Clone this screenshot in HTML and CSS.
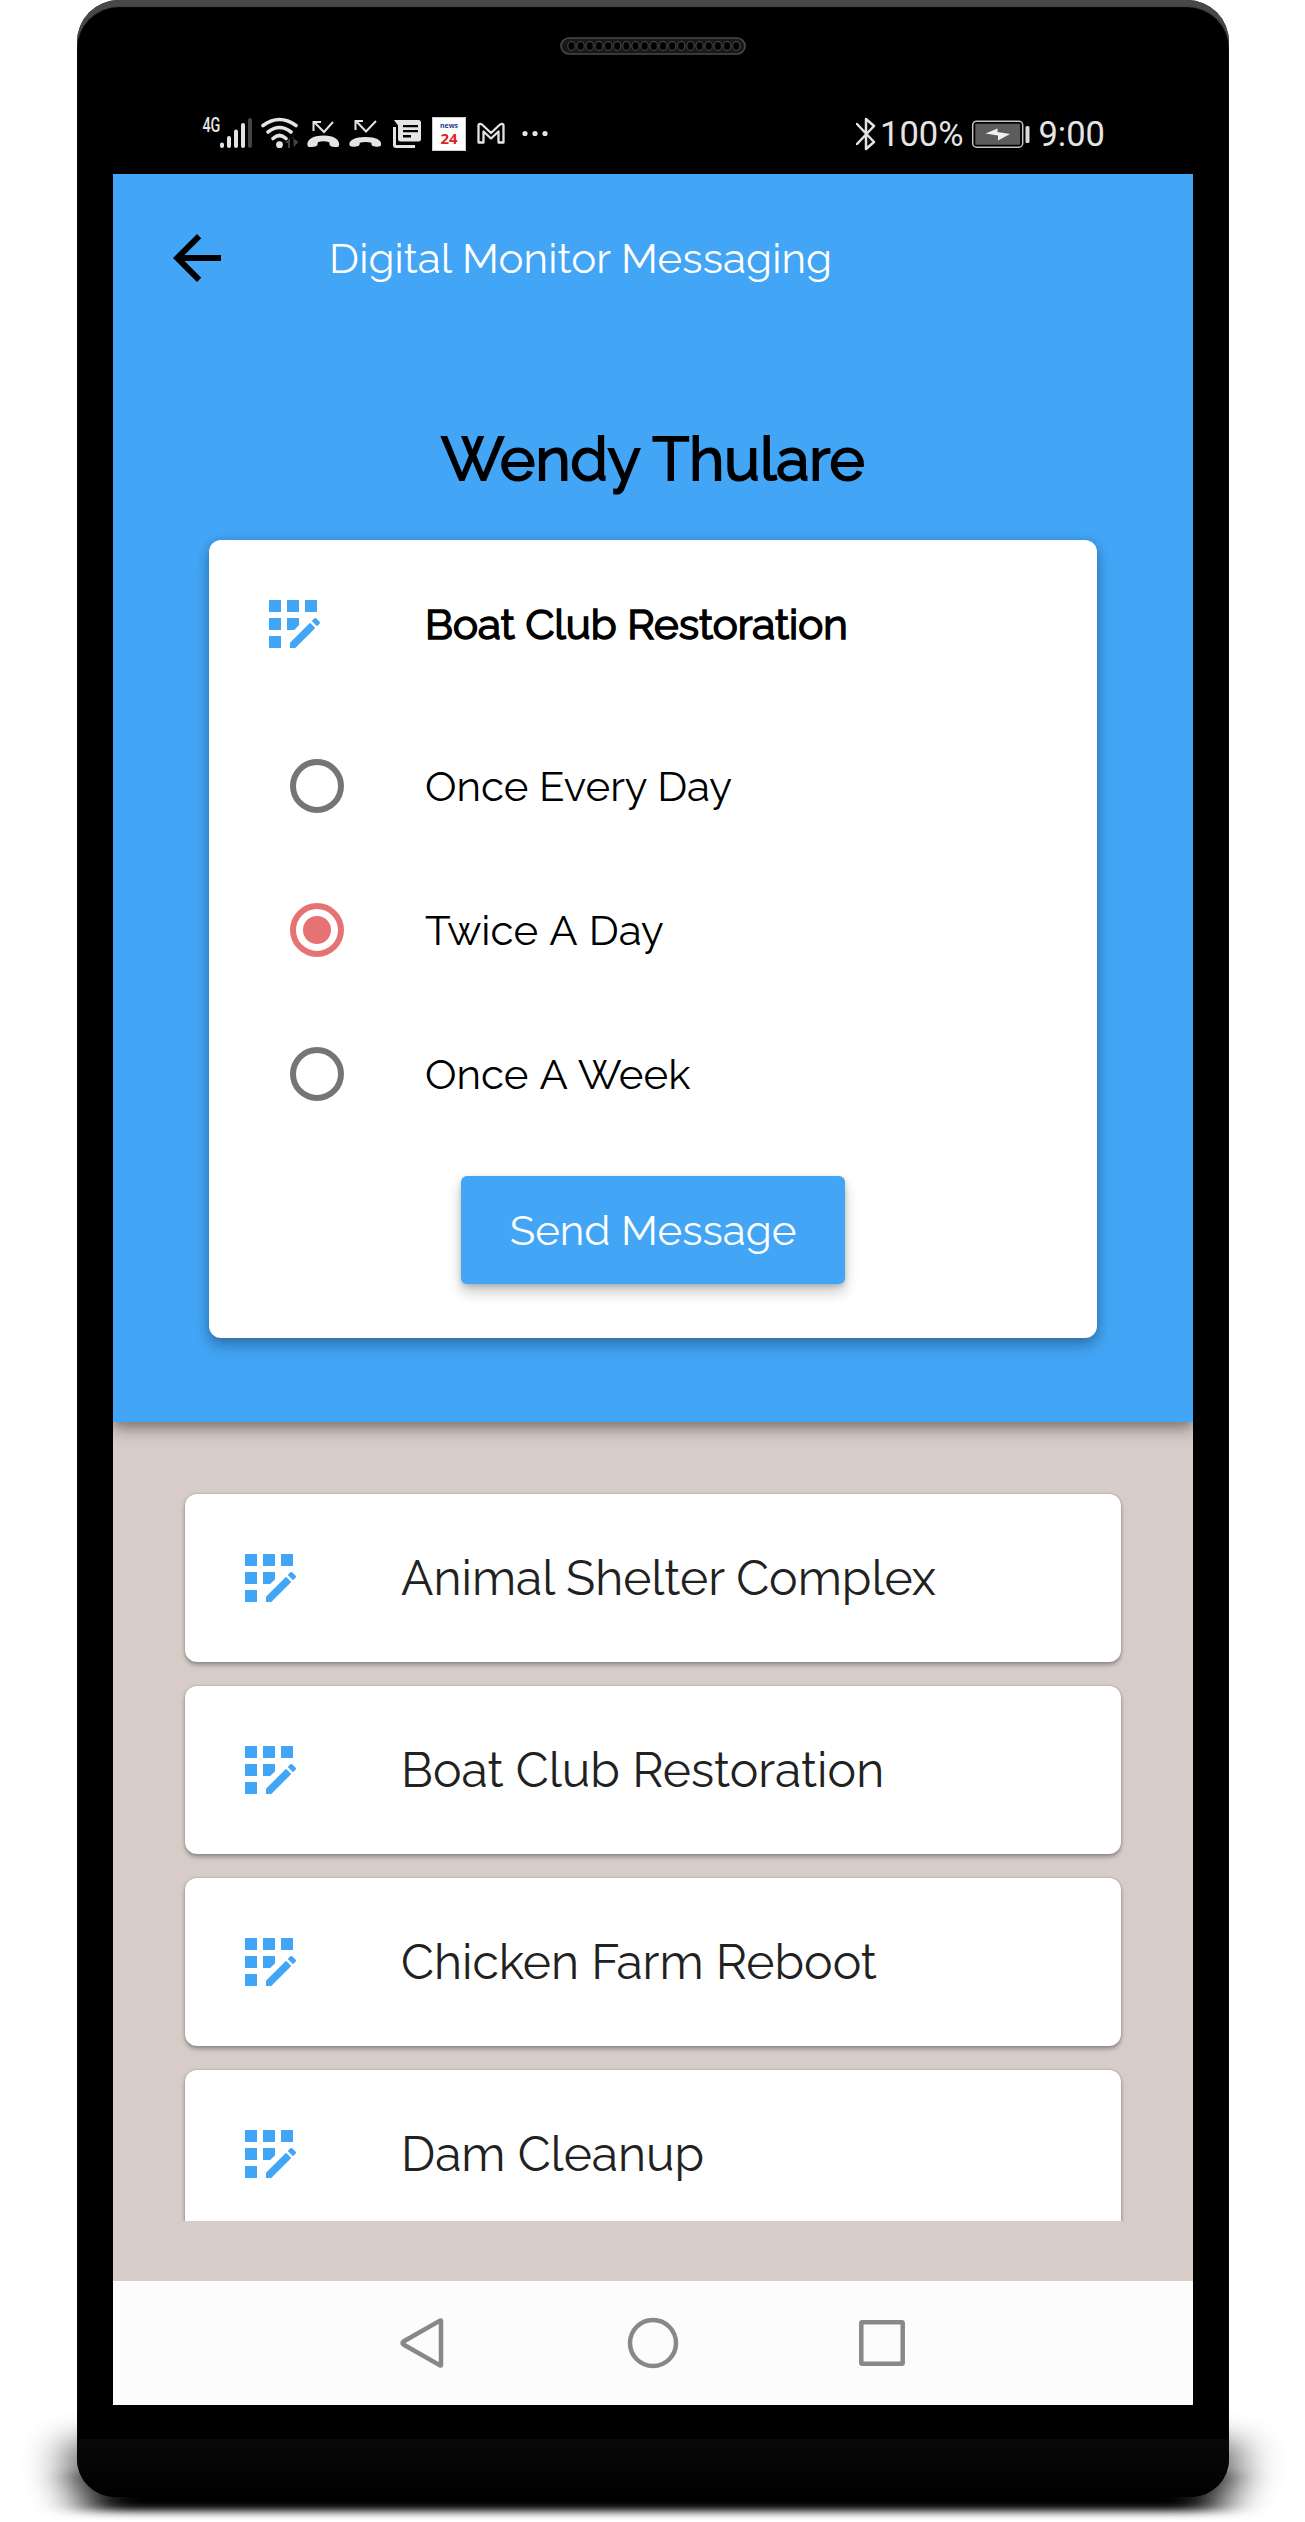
FILE: index.html
```html
<!DOCTYPE html>
<html lang="en">
<head>
<meta charset="utf-8">
<title>Digital Monitor Messaging</title>
<link rel="stylesheet" href="styles.css">
</head>
<body>
<svg class="defs" width="0" height="0" aria-hidden="true">
  <symbol id="app-registration" viewBox="0 0 24 24">
    <path d="M10 4h4v4h-4zM4 16h4v4H4zM4 10h4v4H4zM4 4h4v4H4zM16 4h4v4h-4zM14 12.42V10h-4v4h2.42zM20.88 11.29l-1.17-1.17a.41.41 0 0 0-.58 0L18.25 11 20 12.75l.88-.88a.41.41 0 0 0 0-.58zM11 18.25V20h1.75l6.67-6.67-1.75-1.75z"/>
  </symbol>
</svg>
<div class="stage">
  <svg class="ground-shadow" width="1305" height="2522" viewBox="0 0 1305 2522" aria-hidden="true">
    <defs>
      <filter id="soft" filterUnits="userSpaceOnUse" x="0" y="2300" width="1305" height="222"><feGaussianBlur stdDeviation="24 14"/></filter>
      <filter id="tight" filterUnits="userSpaceOnUse" x="0" y="2300" width="1305" height="222"><feGaussianBlur stdDeviation="24 4"/></filter>
    </defs>
    <rect x="72" y="2440" width="1162" height="48" fill="#000" opacity=".75" filter="url(#soft)"/>
    <rect x="88" y="2472" width="1130" height="39" fill="#000" filter="url(#tight)"/>
  </svg>
  <div class="phone">
    <div class="brow">
      <svg class="speaker" width="186" height="18" viewBox="0 0 186 18" aria-hidden="true">
        <defs><pattern id="holes" x="7" y="4" width="9.15" height="10" patternUnits="userSpaceOnUse"><ellipse cx="4.5" cy="5" rx="3.7" ry="4.4" fill="#000" stroke="#4c4c4c"/></pattern></defs>
        <rect x="1" y="1" width="184" height="16" rx="8" fill="#181818" stroke="#484848" stroke-width="1.6"/>
        <rect x="7" y="4" width="174" height="10" fill="url(#holes)"/>
      </svg>
    </div>
    <div class="status">
      <div class="status-left">
        <svg class="signal" width="51" height="34" viewBox="202 117 51 34">
          <text x="202.400" y="132" class="net" textLength="18" lengthAdjust="spacingAndGlyphs">4G</text>
          <g stroke="#e4e4e4" stroke-width="4" stroke-linecap="round"><path d="M222 144.500v1.500M229 138v8M236 131.500v14.500M243 125v21"/><path stroke="#444" d="M250 120v26"/></g>
        </svg>
        <svg width="38" height="34" viewBox="261 117 38 34">
          <g fill="none" stroke="#e4e4e4" stroke-width="3.600" stroke-linecap="round"><path d="M263 125.500Q279.500 113.500 296 125.500M268 132Q279.500 123 291 132M273 138.500Q279.500 132.500 286 138.500"/></g>
          <circle cx="279.500" cy="144.700" r="3.400" fill="#e4e4e4"/><path d="M285 143l5-5v10h-2v-5zM298.500 142l-5 5v-10h-2" fill="#444"/>
        </svg>
        <svg class="call" width="33" height="34" viewBox="307 117 33 34">
          <path d="M321 122h-7.500v9M314 122l10 10 9-10" fill="none" stroke="#e4e4e4" stroke-width="2"/>
          <path d="M307.500 145.500c-1-5 4-10 16-10s16.500 5 15.500 10c-.3 1.500-2 1.800-6 1.200-3.500-.6-3.500-1.700-3.700-4.500-3.500-1.200-8-1.200-11.500 0-.2 2.800-.2 3.900-3.800 4.500-4 .6-6.200.3-6.500-1.200z" fill="#e4e4e4"/>
        </svg>
        <svg class="call" width="33" height="34" viewBox="307 117 33 34">
          <path d="M321 121h-7.500v9M314 121l10 10.500 10-10.500" fill="none" stroke="#e4e4e4" stroke-width="2"/>
          <path d="M307.500 145c-1-4 4-8 16-8s16.500 4 15.500 8c-.3 1.500-2 2-6 1.500-3.500-.5-3.500-1.500-3.700-3.700-3.500-1.200-8-1.200-11.500 0-.2 2.200-.2 3.200-3.800 3.700-4 .5-6.200 0-6.500-1.500z" fill="#e4e4e4"/>
        </svg>
        <svg width="29" height="34" viewBox="393 117 29 34">
          <path d="M394.500 127v18q0 1.500 1.500 1.500h19" fill="none" stroke="#e4e4e4" stroke-width="3"/>
          <path fill-rule="evenodd" fill="#e4e4e4" d="M394 120h24.500q2.500 0 2.500 2.500V139q0 2.500-2.500 2.500h-18q-2.500 0-2.500-2.500v-13.500zM403 125v2.200h15V125zM403 130v2.200h15V130zM403 135v2.500h8V135z"/>
        </svg>
        <div class="news"><span class="news-word">news</span><span class="news-num">24</span></div>
        <svg width="30" height="34" viewBox="476 117 30 34">
          <path d="M478.500 125.500q0-1.800 2-1.500l1.500.5 9 8.500 9-8.500 1.500-.5q2-.3 2 1.500v17h-5v-11l-7.500 7-7.500-7v11h-5z" fill="none" stroke="#e4e4e4" stroke-width="2.300" stroke-linejoin="round"/>
        </svg>
        <svg class="more" width="26" height="34" viewBox="521.500 117 26 34"><circle cx="524.500" cy="133.500" r="2.600"/><circle cx="534.500" cy="133.500" r="2.600"/><circle cx="544.500" cy="133.500" r="2.600"/></svg>
      </div>
      <div class="status-right">
        <svg width="20" height="34" viewBox="856 116 20 34"><path d="M857 123l17 18-8 7v-30l8 7-17 18" fill="none" stroke="#e4e4e4" stroke-width="2.500" stroke-linejoin="round" stroke-linecap="round"/></svg>
        <span class="pct">100%</span>
        <svg width="60" height="28" viewBox="971 119 60 28">
          <rect x="972.700" y="120.200" width="50" height="26" rx="4" fill="none" stroke="#c4c4c4" stroke-width="1.500"/>
          <rect x="975.300" y="122.700" width="44.800" height="21" rx="1" fill="#5c5c5c"/>
          <path d="M985.500 132.500l12-5v3.500l12.500 2-12 6.500v-5z" fill="#f0f0f0"/>
          <rect x="1025.500" y="125" width="4" height="17" rx="1.500" fill="#dcdcdc"/>
        </svg>
        <span class="clock">9:00</span>
      </div>
    </div>
    <main class="screen">
      <section class="top">
        <header class="appbar">
          <svg width="72" height="72" viewBox="0 0 24 24"><path d="M20 11H7.830l5.590-5.590L12 4l-8 8 8 8 1.410-1.410L7.830 13H20z"/></svg>
          <span class="title">Digital Monitor Messaging</span>
        </header>
        <h1 class="name">Wendy Thulare</h1>
        <div class="card">
          <div class="row head"><svg class="reg"><use href="#app-registration"/></svg><span class="project">Boat Club Restoration</span></div>
          <div class="row"><span class="radio"></span><span class="opt">Once Every Day</span></div>
          <div class="row"><span class="radio on"></span><span class="opt spaced">Twice A Day</span></div>
          <div class="row"><span class="radio"></span><span class="opt spaced">Once A Week</span></div>
          <button class="send">Send Message</button>
        </div>
      </section>
      <section class="bottom">
        <div class="list">
          <div class="item"><svg class="reg"><use href="#app-registration"/></svg><span>Animal Shelter Complex</span></div>
          <div class="item"><svg class="reg"><use href="#app-registration"/></svg><span>Boat Club Restoration</span></div>
          <div class="item"><svg class="reg"><use href="#app-registration"/></svg><span>Chicken Farm Reboot</span></div>
          <div class="item"><svg class="reg"><use href="#app-registration"/></svg><span>Dam Cleanup</span></div>
        </div>
      </section>
      <nav class="nav">
        <svg class="back" width="46" height="52" viewBox="0 0 46 52"><path d="M41 4v44q0 1-1 .3L3.500 27.500q-2-1.500 0-3L40 3.700q1-.7 1 .3z"/></svg>
        <svg width="52" height="52" viewBox="0 0 52 52"><circle cx="26" cy="26" r="23"/></svg>
        <svg width="46" height="52" viewBox="0 0 46 52"><rect x="2.300" y="5.300" width="41.400" height="41.400" rx="1"/></svg>
      </nav>
    </main>
    <div class="chin"></div>
  </div>
</div>
</body>
</html>
```
FILE: styles.css
```css
* { box-sizing: border-box; }
body { margin: 0; background: #fff; font-family: Raleway, Lato, sans-serif; font-weight: 400; }
.defs { position: absolute; }
.stage { position: relative; width: 1305px; height: 2522px; overflow: hidden; padding: 0 76px 0 77px; }
.ground-shadow { position: absolute; left: 0; top: 0; }
.phone {
  position: relative; height: 2497px; display: flex; flex-direction: column;
  background: #000; border-radius: 42px 42px 38px 38px; overflow: hidden;
  box-shadow: inset 0 7px 1px #484848;
}
.brow { height: 104px; padding: 37px 0 0 483px; }
.status { height: 70px; display: flex; justify-content: space-between; padding: 13px 124px 0 125px; color: #e4e4e4; }
.status-left { display: flex; height: 34px; align-items: center; gap: 8px; }
.signal { overflow: visible; }
.call + .call { margin: 0 3px 0 1px; }
.more { margin-left: 7.5px; fill: #e4e4e4; }
.net { font: 500 20px/20px Roboto, sans-serif; fill: #e4e4e4; }
.news { width: 34px; height: 34px; margin: 0 2px; background: #fff; border: 1px solid #ccc; display: flex; flex-direction: column; align-items: center; font-family: "Open Sans", sans-serif; }
.news-word { font-size: 7px; font-weight: 700; line-height: 10px; margin-top: 3px; color: #1d3c8c; }
.news-num { font-size: 15px; font-weight: 700; line-height: 14px; color: #e01f26; }
.status-right { display: flex; height: 34px; align-items: center; font: 400 34.5px/34px Roboto, sans-serif; }
.pct { margin: 0 7.5px 0 4px; }
.clock { margin: 0 0 0 7.5px; }

.screen { width: 1080px; height: 2231px; margin-left: 36px; display: flex; flex-direction: column; background: #d7ccc8; overflow: hidden; }
.top { height: 1248px; flex: none; background: #42a5f5; position: relative; box-shadow: 0 9px 15px rgba(0,0,0,.28), 0 3px 9px rgba(0,0,0,.2); }
.appbar { height: 168px; display: flex; align-items: center; padding-left: 48px; }
.title { margin: 2px 0 0 96px; color: #fff; font-size: 42px; line-height: 50px; letter-spacing: .1px; }
.name { margin: 79px 0 0; height: 119px; line-height: 76px; font-size: 60px; font-weight: 400; letter-spacing: .1px; -webkit-text-stroke: 2.2px #000; text-align: center; color: #000; }
.card { width: 888px; height: 798px; margin: 0 auto; background: #fff; border-radius: 12px; display: flex; flex-direction: column; align-items: flex-start; box-shadow: 0 9px 15px rgba(0,0,0,.2), 0 2px 12px rgba(0,0,0,.2); }
.row { height: 144px; width: 100%; display: flex; align-items: center; padding-left: 81px; font-size: 42px; line-height: 50px; color: #000; }
.row.head { height: 168px; margin-bottom: 6px; padding-left: 48px; }
.reg { width: 72px; height: 72px; fill: #42a5f5; flex: none; }
.project { margin: 2px 0 0 96px; -webkit-text-stroke: 1.6px #000; }
.radio { width: 54px; height: 54px; border: 6px solid #757575; border-radius: 50%; display: grid; place-items: center; }
.radio.on { border-color: #e57373; }
.radio.on::after { content: ""; width: 28px; height: 28px; border-radius: 50%; background: #e57373; }
.opt { margin: 2px 0 0 81px; }
.spaced { word-spacing: 1.8px; }
.send { width: 384px; height: 108px; margin: 30px 0 0 252px; border: 0; border-radius: 6px; background: #42a5f5; color: #fff; font: inherit; font-size: 42px; box-shadow: 0 8px 14px rgba(0,0,0,.22), 0 2px 5px rgba(0,0,0,.16); }
.bottom { height: 859px; flex: none; padding: 60px 60px 0; }
.list { height: 739px; padding: 12px 12px 0; overflow: hidden; display: flex; flex-direction: column; gap: 24px; }
.item { height: 168px; flex: none; display: flex; align-items: center; gap: 96px; padding-left: 48px; background: #fff; border-radius: 12px; color: #212121; font-size: 48px; line-height: 60px; box-shadow: 0 3px 4px rgba(0,0,0,.3), 0 0 3px rgba(0,0,0,.18); }
.nav { flex: 1; display: flex; align-items: center; justify-content: center; gap: 180px; background: #fcfcfc; }
.nav svg { fill: none; stroke: #888; stroke-width: 4.500px; }
.nav .back { margin: 0 1px 0 -1px; }
.chin { margin-top: 34px; flex: 1; background: linear-gradient(#080808, #050505 50%, #000); }
```
